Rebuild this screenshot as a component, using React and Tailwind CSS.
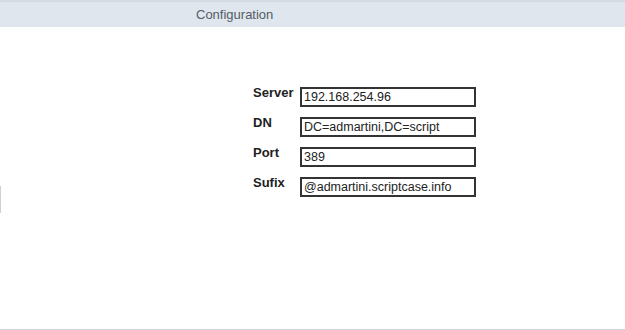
export default function App() {
  const fields = [
    { label: 'Server', value: '192.168.254.96' },
    { label: 'DN', value: 'DC=admartini,DC=script' },
    { label: 'Port', value: '389' },
    { label: 'Sufix', value: '@admartini.scriptcase.info' },
  ];

  return (
    <div className="relative h-[330px] w-[625px] bg-white border-b border-[#cfd8df] font-['Liberation_Sans',Arial,sans-serif] overflow-hidden">
      {/* Header */}
      <div className="h-[27px] bg-[#dfe6ee] border-t-2 border-[#d3dce5] flex items-center pl-[196px] text-[13px] text-[#555c66]">
        Configuration
      </div>

      {/* Form */}
      <div className="pt-[58px] pl-[253px] flex flex-col">
        {fields.map((f) => (
          <div key={f.label} className="h-[30px] flex items-start">
            <div className="w-[47px] text-[13px] leading-[15px] font-bold text-[#222]">{f.label}</div>
            <input
              readOnly
              value={f.value}
              className="mt-[2px] w-[176px] h-[20px] border-2 border-[#333] pl-[2px] text-[12.5px] leading-[15px] text-[#222] outline-none bg-white"
            />
          </div>
        ))}
      </div>

      <div className="absolute left-0 top-[186px] w-px h-[27px] bg-[#d0d0d0]" />
    </div>
  );
}
